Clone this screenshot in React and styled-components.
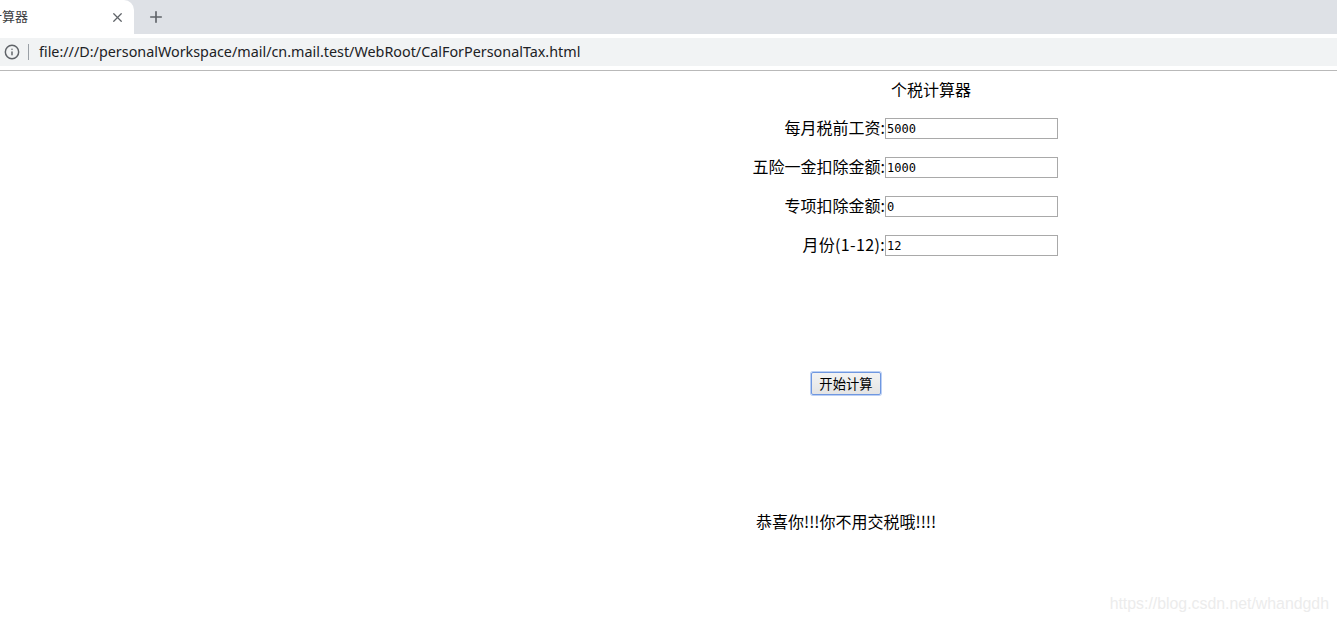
import React from 'react'
import styled, { createGlobalStyle } from 'styled-components'
import { X, Plus, Info } from 'lucide-react'

const GlobalStyle = createGlobalStyle`
  html, body {
    margin: 0;
    padding: 0;
    height: 623px;
    overflow: hidden;
    background: #fff;
  }
  body {
    font-family: "Noto Sans CJK SC", "Noto Sans", sans-serif;
    color: #000;
  }
`

const Page = styled.div`
  position: relative;
  width: 1337px;
  height: 623px;
  overflow: hidden;
`

const TabStrip = styled.div`
  display: flex;
  align-items: center;
  height: 34px;
  background: #dee1e6;
`

const Tab = styled.div`
  display: flex;
  align-items: center;
  justify-content: space-between;
  width: 134px;
  height: 34px;
  padding: 0 9px 0 0;
  box-sizing: border-box;
  background: #fff;
  border-top-right-radius: 10px;
  font-size: 13px;
  color: #3c4043;
`

const TabTitle = styled.span`
  white-space: nowrap;
  margin: 0 0 3px -11px;
`

const IconButton = styled.span`
  display: flex;
  color: ${p => p.$color || '#5f6368'};
  margin-left: ${p => p.$gap || 0}px;
`

const Toolbar = styled.div`
  height: 37px;
  padding-top: 4px;
  box-sizing: border-box;
  border-bottom: 1px solid #b9b9b9;
`

const Omnibox = styled.div`
  display: flex;
  align-items: center;
  height: 28px;
  background: #f1f3f4;
  padding-left: 4px;
  font-family: "Noto Sans", sans-serif;
  font-size: 14.35px;
  color: #202124;
`

const Url = styled.span`
  margin-bottom: 2px;
`

const Divider = styled.span`
  width: 1px;
  height: 16px;
  background: #9aa0a6;
  margin: 0 10px 0 8px;
`

const Main = styled.main`
  display: flex;
  flex-direction: column;
  padding-left: 752px;
  font-size: 16px;
`

const Title = styled.div`
  width: 219px;
  margin: 9px 0 2px;
  height: 18px;
  line-height: 18px;
  text-align: right;
`

const Field = styled.label`
  display: flex;
  justify-content: flex-end;
  align-items: center;
  width: 306px;
  height: 21px;
  margin-top: 18px;
  line-height: 21px;
`

const LabelText = styled.span`
  margin-bottom: 3px;
  letter-spacing: ${p => (p.$wide ? '0.35px' : '0')};
`

const Input = styled.input`
  width: 173px;
  height: 21px;
  padding: 1px;
  box-sizing: border-box;
  border: 1px solid #a9a9a9;
  border-radius: 0;
  outline: none;
  font-family: "DejaVu Sans Mono", "Liberation Mono", monospace;
  font-size: 12px;
  font-weight: 400;
  color: #000;
  background: #fff;
`

const SubmitButton = styled.button`
  align-self: flex-start;
  width: 70px;
  height: 23px;
  margin: 116px 0 0 59px;
  padding: 0;
  box-sizing: border-box;
  border: 1px solid #6f97e0;
  box-shadow: 0 0 0 1px #bcd0f4;
  border-radius: 2px;
  background: linear-gradient(#f3f3f3, #e4e4e4);
  font-family: inherit;
  font-size: 13.33px;
  line-height: 21px;
  color: #000;
`

const Result = styled.div`
  margin: 115px 0 0 4px;
  height: 22px;
  line-height: 22px;
`

const Watermark = styled.div`
  position: absolute;
  right: 8px;
  top: 595px;
  font-family: "Liberation Sans", sans-serif;
  font-size: 15.85px;
  color: #ececec;
`

const fields = [
  { label: '每月税前工资:', value: '5000' },
  { label: '五险一金扣除金额:', value: '1000' },
  { label: '专项扣除金额:', value: '0' },
  { label: '月份(1-12):', value: '12', wide: true },
]

export default function App() {
  return (
    <Page>
      <GlobalStyle />
      <TabStrip>
        <Tab>
          <TabTitle>计算器</TabTitle>
          <IconButton><X size={15} strokeWidth={2} /></IconButton>
        </Tab>
        <IconButton $gap={13}><Plus size={18} strokeWidth={2.2} /></IconButton>
      </TabStrip>
      <Toolbar>
        <Omnibox>
          <IconButton $color="#5f6368"><Info size={16} strokeWidth={2.2} /></IconButton>
          <Divider />
          <Url>file:///D:/personalWorkspace/mail/cn.mail.test/WebRoot/CalForPersonalTax.html</Url>
        </Omnibox>
      </Toolbar>
      <Main>
        <Title>个税计算器</Title>
        {fields.map(f => (
          <Field key={f.label}>
            <LabelText $wide={f.wide}>{f.label}</LabelText>
            <Input defaultValue={f.value} />
          </Field>
        ))}
        <SubmitButton>开始计算</SubmitButton>
        <Result>恭喜你!!!你不用交税哦!!!!</Result>
      </Main>
      <Watermark>https://blog.csdn.net/whandgdh</Watermark>
    </Page>
  )
}
